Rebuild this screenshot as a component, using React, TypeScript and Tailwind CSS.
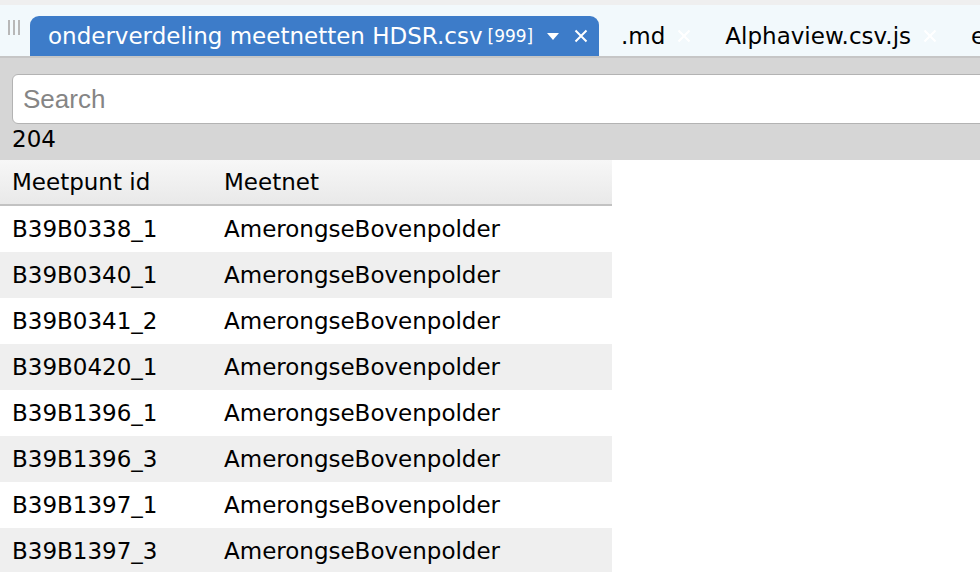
import React from "react";

const rows: [string, string][] = [
  ["B39B0338_1", "AmerongseBovenpolder"],
  ["B39B0340_1", "AmerongseBovenpolder"],
  ["B39B0341_2", "AmerongseBovenpolder"],
  ["B39B0420_1", "AmerongseBovenpolder"],
  ["B39B1396_1", "AmerongseBovenpolder"],
  ["B39B1396_3", "AmerongseBovenpolder"],
  ["B39B1397_1", "AmerongseBovenpolder"],
  ["B39B1397_3", "AmerongseBovenpolder"],
];

const font = { fontFamily: '"DejaVu Sans", Verdana, sans-serif' };

function CloseX({ className }: { className: string }) {
  return (
    <svg width="14" height="14" viewBox="0 0 14 14" className={className}>
      <path d="M1.5 1.5 L12.5 12.5 M12.5 1.5 L1.5 12.5" stroke="currentColor" strokeWidth="2" />
    </svg>
  );
}

export default function App() {
  return (
    <div className="w-[980px] h-[572px] overflow-hidden bg-white" style={font}>
      <div className="h-[5px] bg-[#efefef]" />
      <div className="h-[51px] bg-[#f2f9fc] flex items-end whitespace-nowrap overflow-hidden">
        <div className="w-[30px] shrink-0 h-[40px] flex items-start pt-[4px] pl-[8px] gap-[3px]">
          <div className="w-[2px] h-[15px] bg-[#b8b8b8]" />
          <div className="w-[2px] h-[15px] bg-[#b8b8b8]" />
          <div className="w-[2px] h-[15px] bg-[#b8b8b8]" />
        </div>
        <div className="h-[40px] w-[569px] shrink-0 bg-[#3d7cc9] rounded-t-[9px] flex items-center pl-[18px] text-white">
          <span className="text-[23px] leading-none">onderverdeling meetnetten HDSR.csv</span>
          <span className="text-[17px] ml-[5px] leading-none">[999]</span>
          <svg width="12" height="8" viewBox="0 0 12 8" className="ml-[14px] shrink-0">
            <path d="M0 1 L12 1 L6 8 Z" fill="white" />
          </svg>
          <CloseX className="ml-[15px] text-white shrink-0" />
        </div>
        <div className="h-[40px] shrink-0 flex items-center pl-[22px] text-black">
          <span className="text-[23px] leading-none">.md</span>
          <CloseX className="ml-[12px] text-white shrink-0" />
        </div>
        <div className="h-[40px] shrink-0 flex items-center pl-[34px] text-black">
          <span className="text-[23px] leading-none">Alphaview.csv.js</span>
          <CloseX className="ml-[12px] text-white shrink-0" />
        </div>
        <div className="h-[40px] shrink-0 flex items-center pl-[34px] text-black">
          <span className="text-[23px] leading-none">e</span>
        </div>
      </div>
      <div className="h-[2px] bg-[#c6c6c6]" />
      <div className="bg-[#d6d6d6] h-[102px] pt-[16px] pl-[12px]">
        <div
          className="h-[50px] w-[990px] bg-white border border-[#b3b3b3] rounded-[6px] flex items-center pl-[10px] text-[26px] text-[#858585]"
          style={{ fontFamily: '"Liberation Sans", Arial, sans-serif' }}
        >
          Search
        </div>
        <div className="text-[23px] leading-[26px] mt-[2px] text-black">204</div>
      </div>
      <div className="w-[612px]">
        <div className="h-[46px] flex items-center bg-gradient-to-b from-[#f7f7f7] to-[#e9e9e9] border-b-2 border-[#c2c2c2] text-[23px] text-black">
          <div className="w-[224px] pl-[12px]">Meetpunt id</div>
          <div>Meetnet</div>
        </div>
        {rows.map((r, i) => (
          <div
            key={r[0]}
            className={`h-[46px] flex items-center text-[23px] text-black ${i % 2 === 1 ? "bg-[#efefef]" : "bg-white"}`}
          >
            <div className="w-[224px] pl-[12px]">{r[0]}</div>
            <div>{r[1]}</div>
          </div>
        ))}
      </div>
    </div>
  );
}
